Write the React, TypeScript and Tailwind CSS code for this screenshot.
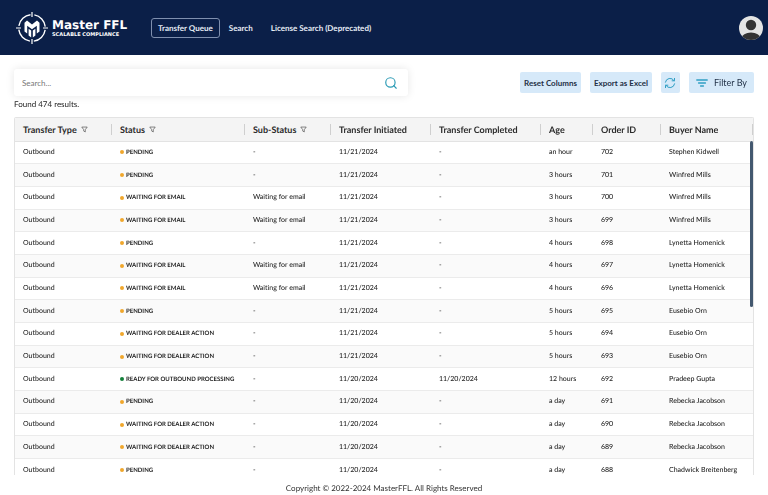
import { FiSearch } from "react-icons/fi";

type Transfer = {
  status: string;
  subStatus: string;
  initiated: string;
  completed: string;
  age: string;
  orderId: number;
  buyer: string;
};

const columns = [
  { label: "Transfer Type", width: "w-[97px]", filter: true },
  { label: "Status", width: "w-[133px]", filter: true },
  { label: "Sub-Status", width: "w-[86px]", filter: true },
  { label: "Transfer Initiated", width: "w-[100px]" },
  { label: "Transfer Completed", width: "w-[110px]" },
  { label: "Age", width: "w-[52px]" },
  { label: "Order ID", width: "w-[68px]" },
  { label: "Buyer Name", width: "w-[92px]" },
];

const PENDING = "PENDING";
const EMAIL = "WAITING FOR EMAIL";
const DEALER = "WAITING FOR DEALER ACTION";
const READY = "READY FOR OUTBOUND PROCESSING";

const transfers: Transfer[] = [
  { status: PENDING, subStatus: "-", initiated: "11/21/2024", completed: "-", age: "an hour", orderId: 702, buyer: "Stephen Kidwell" },
  { status: PENDING, subStatus: "-", initiated: "11/21/2024", completed: "-", age: "3 hours", orderId: 701, buyer: "Winfred Mills" },
  { status: EMAIL, subStatus: "Waiting for email", initiated: "11/21/2024", completed: "-", age: "3 hours", orderId: 700, buyer: "Winfred Mills" },
  { status: EMAIL, subStatus: "Waiting for email", initiated: "11/21/2024", completed: "-", age: "3 hours", orderId: 699, buyer: "Winfred Mills" },
  { status: PENDING, subStatus: "-", initiated: "11/21/2024", completed: "-", age: "4 hours", orderId: 698, buyer: "Lynetta Homenick" },
  { status: EMAIL, subStatus: "Waiting for email", initiated: "11/21/2024", completed: "-", age: "4 hours", orderId: 697, buyer: "Lynetta Homenick" },
  { status: EMAIL, subStatus: "Waiting for email", initiated: "11/21/2024", completed: "-", age: "4 hours", orderId: 696, buyer: "Lynetta Homenick" },
  { status: PENDING, subStatus: "-", initiated: "11/21/2024", completed: "-", age: "5 hours", orderId: 695, buyer: "Eusebio Orn" },
  { status: DEALER, subStatus: "-", initiated: "11/21/2024", completed: "-", age: "5 hours", orderId: 694, buyer: "Eusebio Orn" },
  { status: DEALER, subStatus: "-", initiated: "11/21/2024", completed: "-", age: "5 hours", orderId: 693, buyer: "Eusebio Orn" },
  { status: READY, subStatus: "-", initiated: "11/20/2024", completed: "11/20/2024", age: "12 hours", orderId: 692, buyer: "Pradeep Gupta" },
  { status: PENDING, subStatus: "-", initiated: "11/20/2024", completed: "-", age: "a day", orderId: 691, buyer: "Rebecka Jacobson" },
  { status: DEALER, subStatus: "-", initiated: "11/20/2024", completed: "-", age: "a day", orderId: 690, buyer: "Rebecka Jacobson" },
  { status: DEALER, subStatus: "-", initiated: "11/20/2024", completed: "-", age: "a day", orderId: 689, buyer: "Rebecka Jacobson" },
  { status: PENDING, subStatus: "-", initiated: "11/20/2024", completed: "-", age: "a day", orderId: 688, buyer: "Chadwick Breitenberg" },
];

function LogoMark() {
  return (
    <svg viewBox="0 0 32 32" className="size-8" fill="none" aria-hidden="true">
      <circle
        cx="16"
        cy="16"
        r="13.3"
        stroke="#fff"
        strokeWidth="1.4"
        strokeDasharray="16.9 4"
        strokeDashoffset="-2"
      />
      <path d="M16 0v5M16 27v5M0 16h5M27 16h5" stroke="#fff" strokeWidth="1.2" />
      <g fill="#fff">
        <path d="M8.5 10.8 11 8.4 16 12.6 21 8.4 23.5 10.8V19.6L20.8 21.6V13.8L16 17.2 11.2 13.8V21.6L8.5 19.6Z" />
        <path d="M12.6 16.8 15.2 18.6V25.4L12.6 23.4Z" />
        <path d="M19.4 16.8 16.8 18.6V25.4L19.4 23.4Z" />
      </g>
    </svg>
  );
}

function FilterIcon() {
  return (
    <svg viewBox="0 0 8 8" className="size-[7px]" fill="none" stroke="#555" aria-hidden="true">
      <path d="M.9 1.2h6.2L4.9 4.2v2.6L3.1 5.8V4.2Z" strokeWidth=".8" strokeLinejoin="round" />
    </svg>
  );
}

function Header() {
  return (
    <header className="flex h-[55px] shrink-0 items-center bg-[#0b1f48] pr-[5px] pl-4 text-white">
      <a href="#" className="flex items-center gap-1">
        <LogoMark />
        <span className="flex w-[76px] flex-col whitespace-nowrap">
          <span className="font-['DejaVu_Sans'] text-[12px] leading-[14px] font-bold">Master FFL</span>
          <span className="font-['DejaVu_Sans'] text-[5px] leading-[6px] font-bold">SCALABLE COMPLIANCE</span>
        </span>
      </a>
      <nav className="ml-[23px] flex items-center text-[8px] font-bold text-[#e6ebf4]">
        <a href="#" className="rounded-[3px] border border-[#7f8fae] px-[6px] py-[3px] leading-3">
          Transfer Queue
        </a>
        <a href="#" className="px-[9px]">Search</a>
        <a href="#" className="px-[9px]">License Search (Deprecated)</a>
      </nav>
      <button className="ml-auto" aria-label="Account">
        <svg viewBox="0 0 24 24" className="size-6">
          <clipPath id="avatar">
            <circle cx="12" cy="12" r="12" />
          </clipPath>
          <g clipPath="url(#avatar)">
            <rect width="24" height="24" fill="#e4e4e4" />
            <circle cx="12" cy="9" r="5.2" fill="#333" />
            <ellipse cx="12" cy="22" rx="9.4" ry="5.4" fill="#333" />
          </g>
        </svg>
      </button>
    </header>
  );
}

function Toolbar() {
  return (
    <div className="flex items-center justify-between">
      <label className="flex h-[27px] w-[394px] items-center rounded-[3px] bg-white pr-[10px] pl-2 shadow-[0_0_8px_rgba(0,0,0,0.1)]">
        <input
          type="text"
          autoFocus
          aria-label="Search"
          placeholder="Search..."
          className="min-w-0 flex-1 text-[8px] outline-none placeholder:text-[#777]"
        />
        <FiSearch className="size-[14px] text-[#2b9bb5]" />
      </label>
      <div className="flex gap-[9px] text-[8px] text-[#1f2f45]">
        <button className="h-[21px] rounded-xs bg-[#d6e9f9] px-1 font-bold">Reset Columns</button>
        <button className="h-[21px] rounded-xs bg-[#d6e9f9] px-1 font-bold">Export as Excel</button>
        <button className="flex h-[21px] w-[19px] items-center justify-center rounded-xs bg-[#d6e9f9]" aria-label="Refresh">
          <svg viewBox="0 0 12 12" className="size-3" fill="none" stroke="#2f9fc4" strokeLinecap="round" strokeLinejoin="round">
            <path d="M1.4 5.2A4.7 4.7 0 0 1 10 3.6M10.6 6.8A4.7 4.7 0 0 1 2 8.4" />
            <path d="M10.5 1.4V3.8H8.1M1.5 10.6V8.2H3.9" />
          </svg>
        </button>
        <button className="flex h-[21px] items-center gap-[6px] rounded-xs bg-[#d6e9f9] px-[7px] text-[9px]">
          <svg viewBox="0 0 12 8" className="h-2 w-3" stroke="#2f9fc4" strokeWidth="1.4" strokeLinecap="round" aria-hidden="true">
            <path d="M.8 1h10.4M2.6 4h6.8M4.6 7h2.8" />
          </svg>
          Filter By
        </button>
      </div>
    </div>
  );
}

function TransferTable() {
  return (
    <div className="relative mt-2 min-h-0 flex-1 overflow-hidden rounded-t-xs border border-b-0 border-[#e3e3e3]">
      <table className="h-[364px] w-full table-fixed border-collapse text-left">
        <thead>
          <tr className="h-[23px] border-b border-[#e3e3e3] bg-[#f4f4f4] text-[9px] text-[#2b2b2b]">
            {columns.map((col) => (
              <th key={col.label} className={`${col.width} p-0 font-bold`}>
                <span className="flex h-[11px] items-center gap-1 border-r border-[#cfcfcf] pl-2 whitespace-nowrap">
                  {col.label}
                  {col.filter && <FilterIcon />}
                </span>
              </th>
            ))}
          </tr>
        </thead>
        <tbody className="text-[7px] leading-[9px] font-medium text-[#222] [&_td]:py-0 [&_td]:pr-0 [&_td]:pl-2">
          {transfers.map((t) => (
            <tr key={t.orderId} className="border-b border-[#ebebeb] whitespace-nowrap even:bg-[#fafafa]">
              <td>Outbound</td>
              <td className="text-[6px] font-bold">
                <span className="flex items-center gap-[2px]">
                  <i className={`size-1 shrink-0 rounded-full ${t.status === READY ? "bg-[#13803a]" : "bg-[#f0a72c]"}`} />
                  {t.status}
                </span>
              </td>
              <td>{t.subStatus}</td>
              <td>{t.initiated}</td>
              <td>{t.completed}</td>
              <td>{t.age}</td>
              <td>{t.orderId}</td>
              <td>{t.buyer}</td>
            </tr>
          ))}
        </tbody>
      </table>
      {/* scrollbar thumb */}
      <div className="absolute top-[23px] right-0 h-[166px] w-[3px] rounded-xs bg-[#43586f]" />
    </div>
  );
}

export default function App() {
  return (
    <div className="flex h-screen flex-col bg-white font-[Lato,sans-serif] text-[#222] [font-variant-ligatures:none] [text-rendering:geometricPrecision]">
      <Header />
      <main className="flex min-h-0 flex-1 flex-col px-[14px] pt-[14px]">
        <Toolbar />
        <p className="mt-[3px] text-[8px] leading-[10px]">Found 474 results.</p>
        <TransferTable />
      </main>
      <footer className="pt-[8px] pb-[2px] text-center text-[8px] leading-[10px] text-[#333]">
        Copyright © 2022-2024 MasterFFL. All Rights Reserved
      </footer>
    </div>
  );
}
